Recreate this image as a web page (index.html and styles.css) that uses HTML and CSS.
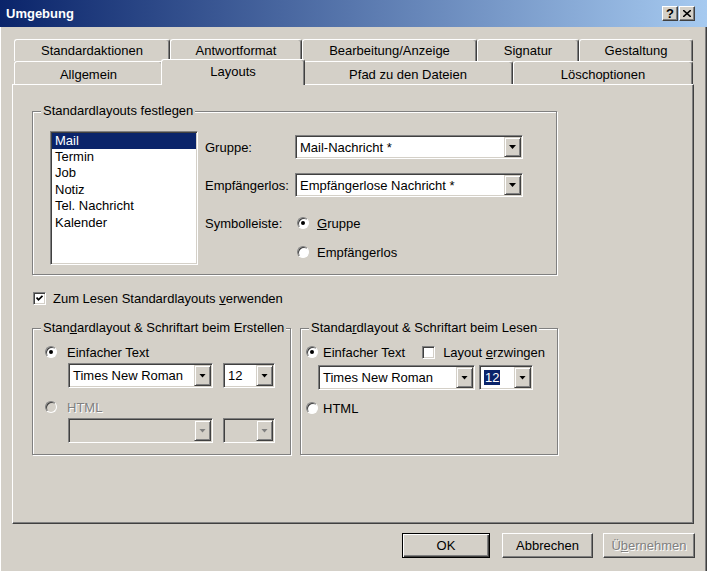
FILE: index.html
```html
<!DOCTYPE html>
<html>
 <head>
     <title>Umgebung</title>
     <link rel="stylesheet" href="styles.css">
     <meta charset="UTF-8">
 </head>
 <body>
  <div class="window">
    <div class="title_bar">
      <span class="title_text">Umgebung</span>
      <span class="title_btn q">?</span>
      <span class="title_btn"><svg width="8" height="7" viewBox="0 0 8 7"><path d="M0 0 L8 7 M8 0 L0 7" stroke="#000" stroke-width="1.6"/></svg></span>
    </div>

    <div class="content">
      <!-- hintere Reiterzeile -->
      <div class="tab_row back">
        <div class="tab t_std">Standardaktionen</div>
        <div class="tab t_antw">Antwortformat</div>
        <div class="tab t_bearb">Bearbeitung/Anzeige</div>
        <div class="tab t_sig">Signatur</div>
        <div class="tab t_gest">Gestaltung</div>
      </div>
      <!-- vordere Reiterzeile -->
      <div class="tab_row front">
        <div class="tab t_allg">Allgemein</div>
        <div class="tab t_lay active">Layouts</div>
        <div class="tab t_pfad">Pfad zu den Dateien</div>
        <div class="tab t_loe">Löschoptionen</div>
      </div>

      <div class="page">
        <fieldset class="group g1">
          <legend>Standardlayouts festlegen</legend>
          <div class="g1_body">
            <div class="list_box">
              <div class="list_item sel">Mail</div>
              <div class="list_item">Termin</div>
              <div class="list_item">Job</div>
              <div class="list_item">Notiz</div>
              <div class="list_item">Tel. Nachricht</div>
              <div class="list_item">Kalender</div>
            </div>
            <div class="g1_fields">
              <div class="field_row r1">
                <span class="field_label">Gruppe:</span>
                <div class="combo c_wide"><span class="combo_text">Mail-Nachricht *</span><span class="combo_btn"></span></div>
              </div>
              <div class="field_row r2">
                <span class="field_label">Empfängerlos:</span>
                <div class="combo c_wide"><span class="combo_text">Empfängerlose Nachricht *</span><span class="combo_btn"></span></div>
              </div>
              <div class="field_row r3">
                <span class="field_label">Symbolleiste:</span>
                <span class="radio on"></span><span class="opt_text"><u>G</u>ruppe</span>
              </div>
              <div class="field_row r4">
                <span class="field_label"></span>
                <span class="radio"></span><span class="opt_text">Empfängerlos</span>
              </div>
            </div>
          </div>
        </fieldset>

        <div class="check_row">
          <span class="check on"><svg width="7" height="7" viewBox="0 0 7 7"><path d="M0.5 2.5 L2.5 4.8 L6.5 0.8" stroke="#000" stroke-width="1.8" fill="none"/></svg></span>
          <span>Zum Lesen Standardlayouts <u>v</u>erwenden</span>
        </div>

        <div class="group_row">
          <fieldset class="group g_left">
            <legend>Stan<u>d</u>ardlayout &amp; Schriftart beim Erstellen</legend>
            <div class="g_left_body">
              <div class="radio_row">
                <span class="radio on"></span><span>Einfacher Text</span>
              </div>
              <div class="combo_row">
                <div class="combo c_font"><span class="combo_text">Times New Roman</span><span class="combo_btn"></span></div>
                <div class="combo c_size"><span class="combo_text">12</span><span class="combo_btn"></span></div>
              </div>
              <div class="radio_row html">
                <span class="radio off"></span><span class="grey">HTML</span>
              </div>
              <div class="combo_row">
                <div class="combo c_font dis"><span class="combo_text"></span><span class="combo_btn"></span></div>
                <div class="combo c_size dis"><span class="combo_text"></span><span class="combo_btn"></span></div>
              </div>
            </div>
          </fieldset>

          <fieldset class="group g_right">
            <legend>Standa<u>r</u>dlayout &amp; Schriftart beim Lesen</legend>
            <div class="g_right_body">
              <div class="radio_row">
                <span class="radio on"></span><span>Einfacher Text</span>
                <span class="check"></span><span class="force_text">Layout <u>e</u>rzwingen</span>
              </div>
              <div class="combo_row">
                <div class="combo c_font"><span class="combo_text">Times New Roman</span><span class="combo_btn"></span></div>
                <div class="combo c_size"><span class="combo_text"><span class="marked">12</span></span><span class="combo_btn"></span></div>
              </div>
              <div class="radio_row html">
                <span class="radio"></span><span>HTML</span>
              </div>
            </div>
          </fieldset>
        </div>
      </div>

      <div class="button_row">
        <div class="btn b_ok">OK</div>
        <div class="btn b_abbr">Abbrechen</div>
        <div class="btn b_ueb grey">Ü<u>b</u>ernehmen</div>
      </div>
    </div>
  </div>
 </body>
</html>
```

FILE: styles.css
```css
body {margin:0; background:#d4d0c8; font-family:"Liberation Sans", Arial, sans-serif; font-size:13px; color:#000;}
u {text-decoration:underline; text-underline-offset:1px;}
.window {width:707px; height:571px; overflow:hidden; background:#d4d0c8; box-shadow:inset 1px 0 #fff, inset -1px 0 #404040, inset -2px 0 #808080;}

/* Titelleiste */
.title_bar {height:27px; display:flex; align-items:center; padding:0 12px 0 6px; background:linear-gradient(to right, #0a246a, #a6caf0); color:#fff; font-weight:bold;}
.title_text {flex:1;}
.title_btn {width:16px; height:15px; box-sizing:border-box; background:#d4d0c8; border:1px solid; border-color:#fff #404040 #404040 #fff; box-shadow:inset -1px -1px #808080; display:flex; align-items:center; justify-content:center; color:#000; font-size:12px; line-height:12px;}
.title_btn.q {font-weight:bold; font-size:13px;}
.title_btn + .title_btn {margin-left:1px;}

.content {padding:12px 13px 0 12px;}

/* Reiter */
.tab_row {display:flex; margin-left:2px;}
.tab {box-sizing:border-box; flex:none; background:#d4d0c8; border-top:1px solid #fff; border-left:1px solid #fff; border-right:1px solid #404040; box-shadow:inset -1px 0 #808080; border-radius:3px 3px 0 0; text-align:center; white-space:nowrap;}
.back .tab {height:22px; line-height:21px;}
.front .tab {height:23px; line-height:25px;}
.front .tab.active {position:relative; z-index:1; height:26px; margin:-2px -2px -1px; line-height:24px;}
.t_std {width:156px;}
.t_antw {width:132px;}
.t_bearb {width:175px;}
.t_sig {width:102px;}
.t_gest {width:114px;}
.t_allg {width:149px;}
.t_lay {width:144px;}
.t_pfad {width:210px;}
.t_loe {width:180px;}

.page {height:440px; box-sizing:border-box; border:1px solid; border-color:#fff #404040 #404040 #fff; box-shadow:inset -1px -1px #808080; padding:18px 0 0 19px;}

/* Gruppenrahmen */
.group {margin:0; padding:0; border:1px solid #808080; box-shadow:inset 1px 1px #fff, 1px 1px #fff; box-sizing:border-box; min-width:0;}
.group legend {margin-left:8px; padding:0 2px; line-height:16px; background:#d4d0c8;}
.g1 {width:525px; height:172px;}
.g1_body {display:flex; padding:12px 0 0 17px;}

.list_box {width:148px; height:134px; box-sizing:border-box; background:#fff; border:1px solid; border-color:#808080 #fff #fff #808080; box-shadow:inset 1px 1px #404040, inset -1px -1px #d4d0c8; padding:1px;}
.list_item {height:16.4px; line-height:16px; padding-left:3px;}
.list_item.sel {height:16px; background:#0a246a; color:#fff;}

.g1_fields {margin-left:7px;}
.field_row {display:flex; align-items:center;}
.field_label {width:90px; flex:none;}
.r1 {margin-top:4px; height:24px;}
.r2 {margin-top:14px; height:24px;}
.r3 {margin-top:16px; height:20px;}
.r4 {margin-top:9px; height:20px;}
.r3 .radio, .r4 .radio {margin-left:2px;}
.opt_text {margin-left:8px;}

/* Kombinationsfelder */
.combo {display:flex; box-sizing:border-box; height:24px; background:#fff; border:1px solid; border-color:#808080 #fff #fff #808080; box-shadow:inset 1px 1px #404040, inset -1px -1px #d4d0c8; padding:1px;}
.combo_text {flex:1; align-self:center; padding-left:3px; white-space:nowrap; overflow:hidden;}
.combo_btn {width:17px; flex:none; box-sizing:border-box; background:#d4d0c8; border:1px solid; border-color:#d4d0c8 #404040 #404040 #d4d0c8; box-shadow:inset 1px 1px #fff, inset -1px -1px #808080; display:flex; align-items:center; justify-content:center;}
.combo_btn::after {content:""; width:7px; height:4px; background:#000; clip-path:polygon(0 0, 100% 0, 50% 100%);}
.combo.dis {background:#d4d0c8;}
.combo.dis .combo_btn::after {background:#808080;}
.c_wide {width:228px;}
.c_font, .c_size {height:25px;}
.marked {background:#0a246a; color:#fff; padding:0 1px;}

/* Optionsfelder und Kontrollkaestchen */
.radio {width:12px; height:12px; flex:none; box-sizing:border-box; border-radius:50%; background:#fff; border:1px solid; border-color:#808080 #fff #fff #808080; box-shadow:inset 1px 1px #404040; display:flex; align-items:center; justify-content:center;}
.radio.on::after {content:""; width:4px; height:4px; border-radius:50%; background:#000;}
.radio.off {background:#d4d0c8;}
.check {width:13px; height:13px; flex:none; box-sizing:border-box; background:#fff; border:1px solid; border-color:#808080 #fff #fff #808080; box-shadow:inset 1px 1px #404040, inset -1px -1px #d4d0c8; display:flex; align-items:center; justify-content:center;}
.grey {color:#808080; text-shadow:1px 1px #fff;}

.check_row {display:flex; align-items:center; height:15px; margin:16px 0 0 1px; gap:7px;}

.group_row {display:flex; margin-top:14px;}
.g_left {width:259px; height:135px;}
.g_right {width:258px; height:135px; margin-left:9px;}
.radio_row {display:flex; align-items:center; height:16px;}
.combo_row {display:flex;}

.g_left_body {padding:8px 0 0 12px;}
.g_left_body .radio_row {gap:10px;}
.g_left_body .combo_row {margin:3px 0 0 23px; gap:10px;}
.g_left_body .html {margin-top:11px;}
.g_left .c_font {width:145px;}
.g_left .c_size {width:52px;}

.g_right_body {padding:8px 0 0 5px;}
.g_right_body .radio_row {gap:5px;}
.g_right_body .check {margin-left:12px;}
.force_text {margin-left:3px;}
.g_right_body .combo_row {margin:5px 0 0 12px; gap:4px;}
.g_right_body .html {margin-top:10px;}
.g_right .c_font {width:157px;}
.g_right .c_size {width:54px;}

/* Schaltflaechen */
.button_row {display:flex; justify-content:flex-end; margin:9px -1px 0 0;}
.btn {height:25px; box-sizing:border-box; background:#d4d0c8; border:1px solid; border-color:#fff #404040 #404040 #fff; box-shadow:inset -1px -1px #808080; display:flex; align-items:center; justify-content:center;}
.b_ok {width:88px; border-color:#000; box-shadow:inset 1px 1px #fff, inset -1px -1px #404040, inset -2px -2px #808080;}
.b_abbr {width:91px; margin-left:12px;}
.b_ueb {width:92px; margin-left:10px;}
```
